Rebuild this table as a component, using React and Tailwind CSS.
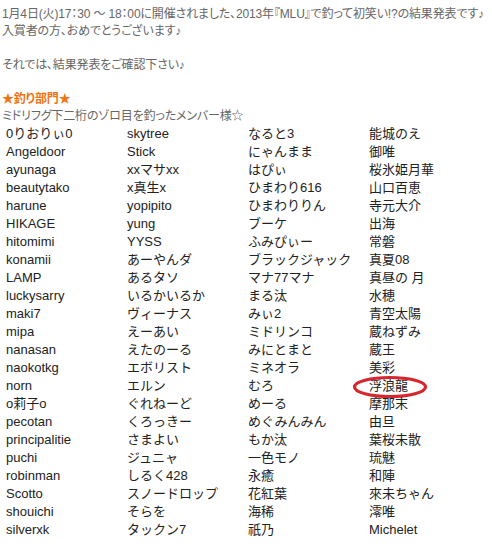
import React from 'react';

const rows = [
  ['0りおりぃ0', 'skytree', 'なると3', '能城のえ'],
  ['Angeldoor', 'Stick', 'にゃんまま', '御唯'],
  ['ayunaga', 'xxマサxx', 'はぴぃ', '桜氷姫月華'],
  ['beautytako', 'x真生x', 'ひまわり616', '山口百恵'],
  ['harune', 'yopipito', 'ひまわりりん', '寺元大介'],
  ['HIKAGE', 'yung', 'ブーケ', '出海'],
  ['hitomimi', 'YYSS', 'ふみぴぃー', '常磐'],
  ['konamii', 'あーやんダ', 'ブラックジャック', '真夏08'],
  ['LAMP', 'あるタソ', 'マナ77マナ', '真昼の 月'],
  ['luckysarry', 'いるかいるか', 'まる汰', '水穂'],
  ['maki7', 'ヴィーナス', 'みぃ2', '青空太陽'],
  ['mipa', 'えーあい', 'ミドリンコ', '蔵ねずみ'],
  ['nanasan', 'えたのーる', 'みにとまと', '蔵王'],
  ['naokotkg', 'エボリスト', 'ミネオラ', '美彩'],
  ['norn', 'エルン', 'むろ', '浮浪龍'],
  ['o莉子o', 'ぐれねーど', 'めーる', '摩那末'],
  ['pecotan', 'くろっきー', 'めぐみんみん', '由旦'],
  ['principalitie', 'さまよい', 'もか汰', '葉桜未散'],
  ['puchi', 'ジュニャ', '一色モノ', '琉魅'],
  ['robinman', 'しるく428', '永癒', '和陣'],
  ['Scotto', 'スノードロップ', '花紅葉', '來未ちゃん'],
  ['shouichi', 'そらを', '海稀', '澪唯'],
  ['silverxk', 'タックン7', '祇乃', 'Michelet'],
];

const jp = "font-['Liberation_Sans','Noto_Sans_CJK_JP',sans-serif]";

const Cell = ({ text, circled }) => (
  <div className="relative h-[18px] leading-[18px] pl-[4px] whitespace-nowrap">
    {text}
    {circled && (
      <svg className="absolute left-[-13px] top-[-2px] pointer-events-none" width="76" height="24" viewBox="0 0 76 24">
        <ellipse cx="38" cy="12" rx="35.5" ry="9.5" fill="none" stroke="#d8262e" strokeWidth="3.2" />
      </svg>
    )}
  </div>
);

export default function App() {
  return (
    <div className={`w-[492px] h-[546px] overflow-hidden bg-white ${jp}`}>
      <div className="pl-[2px] pt-[6px] text-[12px] leading-[17px] text-[#666] [font-feature-settings:'palt'] tracking-[-0.15px]">
        <p className="whitespace-nowrap">1月4日(火)17：30 ～ 18：00に開催されました、2013年『MLU』で釣って初笑い!?の結果発表です♪</p>
        <p>入賞者の方、おめでとうございます♪</p>
        <p>&nbsp;</p>
        <p>それでは、結果発表をご確認下さい♪</p>
        <p>&nbsp;</p>
        <p className="font-bold text-[#f07414]">★釣り部門★</p>
        <p>ミドリフグ下二桁のゾロ目を釣ったメンバー様☆</p>
      </div>
      <div className="grid grid-cols-[121px_121px_121px_121px] pl-[2px] text-[13px] text-[#222]">
        {rows.map((r, i) => (
          <React.Fragment key={i}>
            {r.map((t, j) => (
              <Cell key={j} text={t} circled={t === '浮浪龍'} />
            ))}
          </React.Fragment>
        ))}
      </div>
    </div>
  );
}
